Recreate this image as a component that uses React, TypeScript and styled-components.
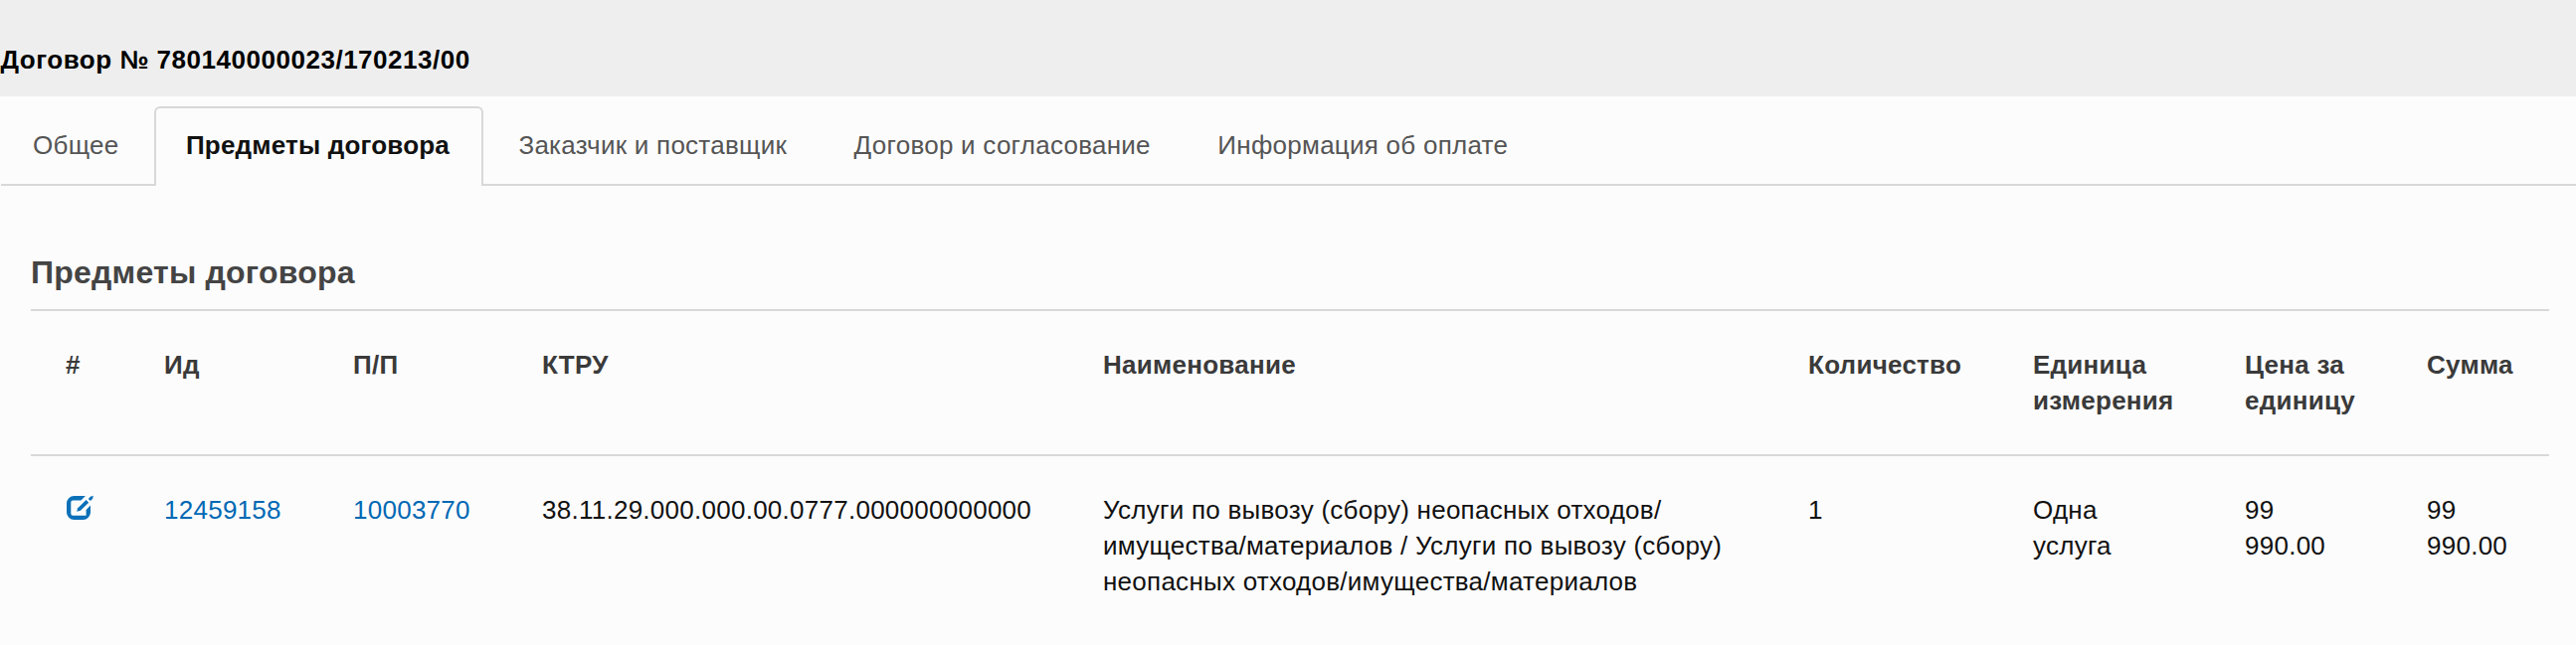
import React from 'react';
import styled, { createGlobalStyle } from 'styled-components';

const GlobalStyle = createGlobalStyle`
  * { box-sizing: border-box; }
  body {
    margin: 0;
    background: #fcfcfc;
    color: #111;
    font: 26px/36px "Liberation Sans", Arial, sans-serif;
    letter-spacing: 0.01em;
  }
`;

const Page = styled.div`
  min-height: 649px;
  background: #fcfcfc;
`;

const TitleBar = styled.header`
  height: 97px;
  padding: 42px 0 0 0.5px;
  background: #eee;
`;

const Title = styled.h1`
  margin: 0;
  font-size: 26px;
  line-height: 36px;
  letter-spacing: 0.52px;
  color: #000;
`;

const Tabs = styled.nav`
  display: flex;
  gap: 3.5px;
  height: 90px;
  margin-left: 1px;
  padding-top: 10px;
  border-bottom: 2px solid #d8d8d8;
`;

const Tab = styled.a<{ $active?: boolean }>`
  height: 80px;
  padding: 19px 30px 0;
  border: 2px solid transparent;
  border-bottom: 0;
  color: #555;
  white-space: nowrap;
  ${({ $active }) =>
    $active &&
    `
    width: 331px;
    background: #fcfcfc;
    border-color: #d8d8d8;
    border-radius: 6px 6px 0 0;
    color: #111;
    font-weight: bold;
    letter-spacing: 0.2px;
  `}
`;

const Section = styled.section`
  width: 2563px;
  padding: 67px 0 0 31px;
`;

const SectionTitle = styled.h2`
  height: 57px;
  margin: 0;
  font-size: 32px;
  line-height: 40px;
  letter-spacing: 0.22px;
  color: #444;
`;

const Table = styled.table`
  width: 2532px;
  table-layout: fixed;
  border-collapse: separate;
  border-spacing: 0;
  text-align: left;
`;

const Column = styled.col<{ $width: number }>`
  width: ${({ $width }) => $width}px;
`;

const HeadCell = styled.th`
  padding: 36px 20px 36px 35px;
  border-top: 2px solid #d8d8d8;
  border-bottom: 2px solid #d8d8d8;
  vertical-align: top;
  color: #3a3a3a;
`;

const Cell = styled.td`
  padding: 36px 0 36px 35px;
  vertical-align: top;
  white-space: nowrap;
`;

const Link = styled.a`
  color: #0068b4;
`;

const IconLink = styled.a`
  display: block;
  padding: 3px 0 0 1px;
  color: #0b70b8;
`;

const Icon = styled.svg`
  display: block;
  width: 28px;
  height: 26px;
  fill: currentColor;
`;

const EditIcon = () => (
  <Icon viewBox="0 0 28 26">
    <path d="M18.9 1H7.5A7.5 7.5 0 0 0 0 8.5v9A7.5 7.5 0 0 0 7.5 25h9a7.5 7.5 0 0 0 7.500-7.500V10.500l-4.400 4.500v5.700H6.300a2 2 0 0 1-2-2V7.400a2 2 0 0 1 2-2H14.500z" />
    <path d="M19.600 5.100L22.200 7.700 13.900 15.800 10.200 16.800 11.200 13.300z" />
    <path d="M22.200 3.500l2-2a1 1 0 0 1 1.200 0l1.400-.8.200.2-.7 1.500a1 1 0 0 1 0 1.200l-1.800 1.900a.8.8 0 0 1-1.200 0l-1.100-1.100a.7.7 0 0 1 0-.9z" />
  </Icon>
);

const tabs = ['Общее', 'Предметы договора', 'Заказчик и поставщик', 'Договор и согласование', 'Информация об оплате'];

const columns = [
  { label: '#', width: 99 },
  { label: 'Ид', width: 190 },
  { label: 'П/П', width: 190 },
  { label: 'КТРУ', width: 564 },
  { label: 'Наименование', width: 709 },
  { label: 'Количество', width: 226 },
  { label: 'Единица измерения', width: 213 },
  { label: 'Цена за единицу', width: 183 },
  { label: 'Сумма', width: 158 },
];

export default function App() {
  return (
    <Page>
      <GlobalStyle />
      <TitleBar>
        <Title>Договор № 780140000023/170213/00</Title>
      </TitleBar>
      <Tabs>
        {tabs.map((tab, i) => (
          <Tab key={tab} $active={i === 1}>{tab}</Tab>
        ))}
      </Tabs>
      <Section>
        <SectionTitle>Предметы договора</SectionTitle>
        <Table>
          <colgroup>
            {columns.map((c) => <Column key={c.label} $width={c.width} />)}
          </colgroup>
          <thead>
            <tr>
              {columns.map((c) => <HeadCell key={c.label}>{c.label}</HeadCell>)}
            </tr>
          </thead>
          <tbody>
            <tr>
              <Cell><IconLink><EditIcon /></IconLink></Cell>
              <Cell><Link>12459158</Link></Cell>
              <Cell><Link>10003770</Link></Cell>
              <Cell>38.11.29.000.000.00.0777.000000000000</Cell>
              <Cell>
                Услуги по вывозу (сбору) неопасных отходов/<br />
                имущества/материалов / Услуги по вывозу (сбору)<br />
                неопасных отходов/имущества/материалов
              </Cell>
              <Cell>1</Cell>
              <Cell>Одна<br />услуга</Cell>
              <Cell>99<br />990.00</Cell>
              <Cell>99<br />990.00</Cell>
            </tr>
          </tbody>
        </Table>
      </Section>
    </Page>
  );
}
